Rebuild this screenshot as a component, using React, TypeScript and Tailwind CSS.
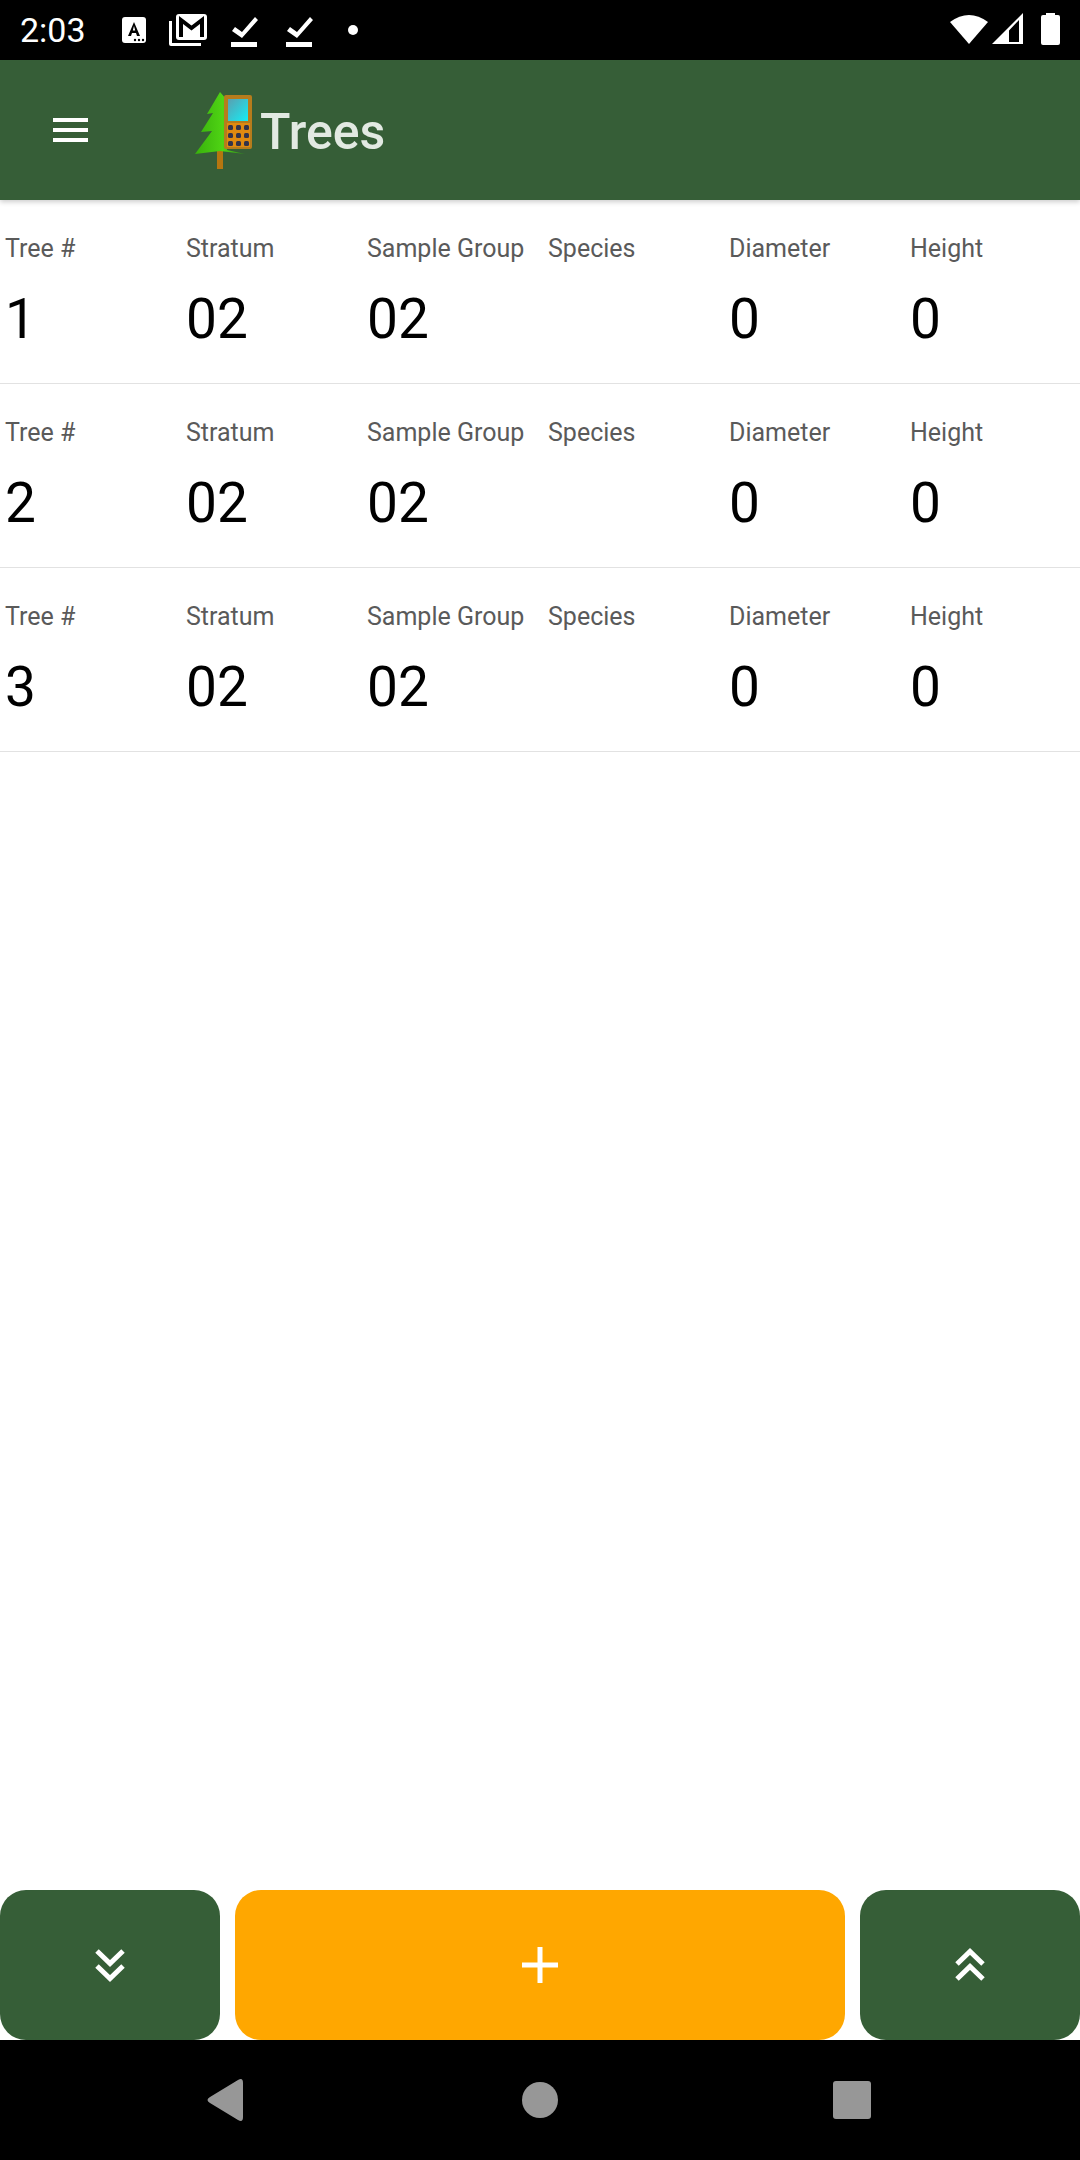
const font = { fontFamily: "Roboto, sans-serif" };

const cols = ["Tree #", "Stratum", "Sample Group", "Species", "Diameter", "Height"];
const rows = [
  ["1", "02", "02", "", "0", "0"],
  ["2", "02", "02", "", "0", "0"],
  ["3", "02", "02", "", "0", "0"],
];

function Logo() {
  return (
    <svg width="60" height="78" viewBox="0 0 60 78" className="shrink-0">
      <defs>
        <linearGradient id="leaf" x1="0" y1="0" x2="1" y2="0">
          <stop offset="0" stopColor="#38b00c" />
          <stop offset="0.55" stopColor="#4fd414" />
          <stop offset="1" stopColor="#2f8f18" />
        </linearGradient>
        <linearGradient id="screen" x1="0" y1="0" x2="1" y2="1">
          <stop offset="0" stopColor="#5a9fb0" />
          <stop offset="1" stopColor="#14eef5" />
        </linearGradient>
      </defs>
      <rect x="22" y="58" width="6" height="19" fill="#b5760f" />
      <path d="M25 0 L32 8 L32 58 L50 62 L25 59 L0 62 L17 39 L6 40 L18 21 L12 22 Z" fill="url(#leaf)" />
      <rect x="29" y="3" width="28" height="54" rx="2" fill="#b67c1c" />
      <rect x="33" y="7" width="20" height="22" fill="url(#screen)" />
      <rect x="32" y="31" width="23" height="24" fill="#e08a10" />
      <g fill="#33334a">
        {[33, 41, 49].map((y) => [33, 41, 49].map((x) => <rect key={`${x}-${y}`} x={x} y={y} width="5" height="5" rx="1.5" />))}
      </g>
    </svg>
  );
}

function StatusBar() {
  return (
    <div className="relative h-[60px] shrink-0 bg-black text-white">
      <span className="absolute left-[20px] top-[11px] text-[34px] leading-[38px]" style={font}>2:03</span>
      <svg className="absolute left-[120px] top-[14px]" width="270" height="34" viewBox="0 0 270 34" fill="white">
        <rect x="2" y="3" width="24" height="26" rx="3" />
        <path d="M14 8 L8 22 H11 L12 19 H16 L17 22 H20 Z" fill="black" />
        <path d="M14 12 L15.2 16.5 H12.8 Z" fill="white" />
        <g fill="black"><circle cx="15" cy="26" r="1.2" /><circle cx="19" cy="26" r="1.2" /><circle cx="23" cy="26" r="1.2" /></g>
        <path d="M49 7 V30 Q49 32 51 32 H81 V29 H52 V7 Z" fill="white" />
        <rect x="56" y="0" width="31" height="26" rx="3" />
        <path d="M61 23 V6 L71.5 14 L82 6 V23" fill="none" stroke="black" strokeWidth="4" />
        <path d="M112 17 L115 13 L122 18 L135 3 L138 6 L122 24 Z" />
        <rect x="111" y="28" width="26" height="5" />
        <path d="M167 17 L170 13 L177 18 L190 3 L193 6 L177 24 Z" />
        <rect x="166" y="28" width="26" height="5" />
        <circle cx="233" cy="16" r="5" />
      </svg>
      <svg className="absolute left-[948px] top-[12px]" width="114" height="34" viewBox="0 0 114 34" fill="white">
        <path d="M2 10 Q21 -4 40 10 L21 32 Z" />
        <path d="M75 1 V32 H44 Z M71 8 L61 18.5 V30 H71 Z" fillRule="evenodd" />
        <path d="M93 5 Q93 3 95 3 H98 V1 H107 V3 H110 Q112 3 112 5 V31 Q112 33 110 33 H95 Q93 33 93 31 Z" />
      </svg>
    </div>
  );
}

function Header() {
  return (
    <div className="relative z-10 flex h-[140px] shrink-0 items-center bg-[#365e37] shadow-[0_2px_5px_rgba(0,0,0,0.2)]">
      <div className="ml-[53px] flex w-[35px] flex-col gap-[6px]">
        <div className="h-[4px] bg-white" />
        <div className="h-[4px] bg-white" />
        <div className="h-[4px] bg-white" />
      </div>
      <div className="ml-[107px] mt-[2px]"><Logo /></div>
      <span className="ml-[5px] mt-[4px] text-[50px] font-medium leading-none text-[#e2e9e2]" style={font}>Trees</span>
    </div>
  );
}

function Row({ values }: { values: string[] }) {
  return (
    <div className="grid h-[184px] grid-cols-[repeat(6,181px)] border-b border-[#e2e2e2] pl-[5px]">
      {cols.map((label, i) => (
        <div key={label} className="pt-[34px]">
          <div className="whitespace-nowrap text-[25px] leading-[30px] text-[#5a5a5a]" style={font}>{label}</div>
          <div className="mt-[22px] h-[66px] text-[55px] leading-[66px] text-black" style={font}>{values[i]}</div>
        </div>
      ))}
    </div>
  );
}

function Chevrons({ up }: { up?: boolean }) {
  return (
    <svg width="30" height="34" viewBox="0 0 30 34" fill="none" stroke="white" strokeWidth="5" className={up ? "rotate-180" : ""}>
      <path d="M2 3 L15 15.5 L28 3" />
      <path d="M2 18 L15 30.5 L28 18" />
    </svg>
  );
}

function BottomButtons() {
  return (
    <div className="flex h-[150px] shrink-0 gap-[15px]">
      <div className="flex w-[220px] items-center justify-center rounded-[26px] bg-[#365e37]"><Chevrons /></div>
      <div className="flex flex-1 items-center justify-center rounded-[26px] bg-[#ffa700]">
        <svg width="36" height="36" viewBox="0 0 36 36" fill="white">
          <rect x="15.5" y="0" width="5" height="36" />
          <rect x="0" y="15.5" width="36" height="5" />
        </svg>
      </div>
      <div className="flex w-[220px] items-center justify-center rounded-[26px] bg-[#365e37]"><Chevrons up /></div>
    </div>
  );
}

function NavBar() {
  return (
    <div className="flex h-[120px] shrink-0 items-center bg-black">
      <svg width="1080" height="120" viewBox="0 0 1080 120" fill="#979797">
        <path d="M238 40 Q243 37 243 43 V77 Q243 83 238 80 L210 63 Q205 60 210 57 Z" />
        <circle cx="540" cy="60" r="18" />
        <rect x="833" y="41" width="38" height="38" rx="3" />
      </svg>
    </div>
  );
}

export default function App() {
  return (
    <div className="flex h-[2160px] w-[1080px] flex-col overflow-hidden bg-white">
      <StatusBar />
      <Header />
      <div className="flex-1">
        {rows.map((r) => <Row key={r[0]} values={r} />)}
      </div>
      <BottomButtons />
      <NavBar />
    </div>
  );
}
